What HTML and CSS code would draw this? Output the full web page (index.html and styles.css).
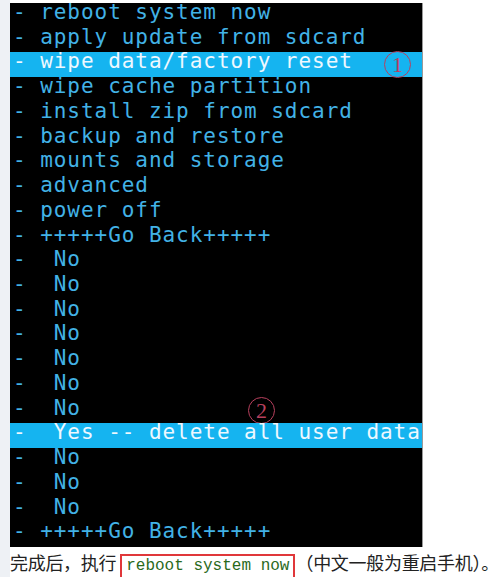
FILE: index.html
```html
<!DOCTYPE html>
<html lang="zh-CN">
<head>
  <meta charset="UTF-8">
  <meta name="viewport" content="width=device-width, initial-scale=1.0">
  <title>Recovery 恢复出厂设置</title>
  <link rel="stylesheet" href="styles.css">
</head>
<body>
  <div class="page">
    <section class="screen">
      <div class="row">- reboot system now</div>
      <div class="row">- apply update from sdcard</div>
      <div class="row selected">- wipe data/factory reset<span class="mark mark-1">1</span></div>
      <div class="row">- wipe cache partition</div>
      <div class="row">- install zip from sdcard</div>
      <div class="row">- backup and restore</div>
      <div class="row">- mounts and storage</div>
      <div class="row">- advanced</div>
      <div class="row">- power off</div>
      <div class="row">- +++++Go Back+++++</div>
      <div class="row">-  No</div>
      <div class="row">-  No</div>
      <div class="row">-  No</div>
      <div class="row">-  No</div>
      <div class="row">-  No</div>
      <div class="row">-  No</div>
      <div class="row">-  No<span class="mark mark-2">2</span></div>
      <div class="row selected">-  Yes -- delete all user data</div>
      <div class="row">-  No</div>
      <div class="row">-  No</div>
      <div class="row">-  No</div>
      <div class="row">- +++++Go Back+++++</div>
    </section>

    <p class="note">完成后，执行<code>reboot system now</code>（中文一般为重启手机）。</p>
  </div>
</body>
</html>
```

FILE: styles.css
```css
body {
  margin: 0;
  background-color: #eef1f5;
  font-family: "Noto Sans CJK SC", sans-serif;
}
.page {
  margin-left: 10px;
  padding-top: 3px;
  height: 574px;
  background-color: #fff;
}
.screen {
  width: 413px;
  height: 544px;
  box-sizing: border-box;
  background-color: #000;
  border-right: 1px solid #999;
  display: grid;
  grid-template-rows: repeat(22, 1fr);
  font-family: "DejaVu Sans Mono", monospace;
  font-size: 21px;
  letter-spacing: 0.95px;
  color: #42b2e6;
}
.row {
  position: relative;
  padding-left: 3px;
  line-height: 18px;
  white-space: pre;
}
.row.selected {
  background-color: #15b4f0;
  color: #eef8ff;
}
.mark {
  position: absolute;
  width: 25px;
  height: 25px;
  border: 1px solid #b8405e;
  border-radius: 50%;
  color: #b8405e;
  font-family: "Liberation Serif", serif;
  font-size: 22px;
  line-height: 25px;
  letter-spacing: 0;
  text-align: center;
}
.mark-1 {
  left: 374px;
  top: -1px;
}
.mark-2 {
  left: 238px;
  top: -2px;
}
.note {
  margin: 3px 0 0;
  font-size: 18px;
  line-height: 25px;
  letter-spacing: -0.3px;
  color: #222;
  white-space: nowrap;
}
.note code {
  display: inline-block;
  margin: 0 0 0 4px;
  padding: 1px 4px;
  border: 2px solid #e0373a;
  font-family: "Liberation Mono", monospace;
  font-size: 16px;
  line-height: 19px;
  letter-spacing: 0;
  color: #2a6a1c;
}
```
